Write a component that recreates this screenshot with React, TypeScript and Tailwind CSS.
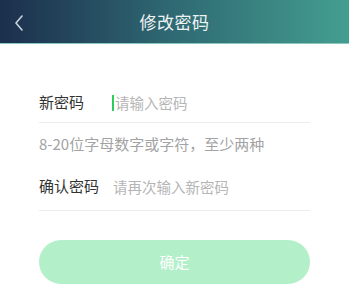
export default function App() {
  const font = { fontFamily: '"Noto Sans CJK SC", "Noto Sans", sans-serif' }

  return (
    <div className="w-[349px] h-[308px] bg-white overflow-hidden" style={font}>
      <header className="relative h-[44px] flex items-center justify-center bg-gradient-to-r from-[#1c2f4d] via-[#2f6a73] to-[#449e90] border-b border-[#8cc7bd]">
        <button className="absolute left-[12px] top-[14px] w-[14px] h-[18px] flex items-center justify-center">
          <svg viewBox="0 0 10 16" className="w-[10px] h-[16px]" fill="none" stroke="#c9d3da" strokeWidth="1.6" strokeLinecap="round" strokeLinejoin="round">
            <polyline points="8,1 2,8 8,15" />
          </svg>
        </button>
        <h1 className="text-[17px] text-[#eef3f3] tracking-[0.5px]">修改密码</h1>
      </header>

      <div className="px-[39px]">
        <div className="mt-[39px] h-[40px] flex items-center border-b border-[#ededed]">
          <span className="w-[73px] text-[15px] text-[#333]">新密码</span>
          <span className="w-[2px] h-[16px] bg-[#2ecc5a] mr-px" />
          <span className="text-[14.5px] text-[#b5b5b5]">请输入密码</span>
        </div>

        <p className="mt-[11px] text-[15px] leading-[20px] text-[#a3a3a3]">8-20位字母数字或字符，至少两种</p>

        <div className="mt-[9px] h-[48px] flex items-center border-b border-[#ededed]">
          <span className="w-[74px] text-[15px] text-[#333]">确认密码</span>
          <span className="text-[14.5px] text-[#b5b5b5]">请再次输入新密码</span>
        </div>

        <button className="mt-[29px] w-full h-[44px] rounded-full bg-[#b3f0c9] text-white text-[15px]">
          确定
        </button>
      </div>
    </div>
  )
}
